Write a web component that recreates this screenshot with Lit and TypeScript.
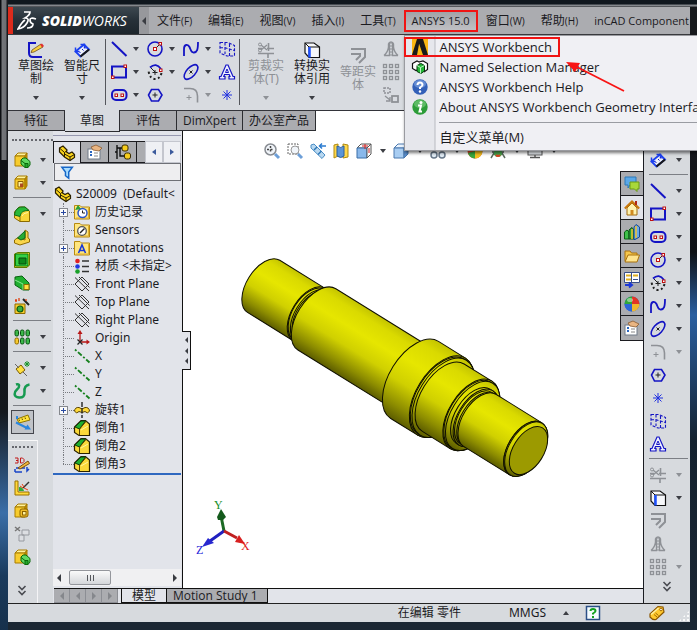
import { LitElement, html, svg, css, nothing, type TemplateResult, type SVGTemplateResult } from "lit";
import { customElement, property } from "lit/decorators.js";
import { classMap } from "lit/directives/class-map.js";

const B = "#1414c4";
const G = "#8e9196";

const cubeBase = svg`<path d="M1 4 4 1H13L11 4Z" fill="#fff29a" stroke="#a87c00"/><path d="M1 4H11V14H1Z" fill="#f7cc2e" stroke="#a87c00"/><path d="M11 4 13 1V11L11 14Z" fill="#c89200" stroke="#a87c00"/>`;
const greenCube = svg`<path d="M7 8 9 6H12L16 9.500V13L14 15.500H11L7 12Z" fill="#5fd860" stroke="#0a6a0a"/><path d="M11 11.500H14V15.500H11ZM7 8.500 11 11.500" fill="#23a82c" stroke="#0a6a0a"/>`;
const fillet = svg`<path d="M.5 6 5 1H11L15.500 5V15.500H6L.5 12Z" fill="#f9d63a" stroke="#8a6a00"/><path d="M.5 9C1 4 4 1 8 1H11L15 4.500C9 4.500 7 6 6 10.500Z" fill="#28b838" stroke="#0a6a18"/><path d="M6 10.500V15.500" stroke="#8a6a00"/><path d="M8 10Q9 7 14 6.500" fill="none" stroke="#fff6a0"/>`;
const chamfer = svg`<path d="M.5 7 7 .5H11.500L15.500 4V15.500H5L.5 12.500Z" fill="#fbd93a" stroke="#2a2200" stroke-width="1.200"/><path d="M1 7 7 1H11.500L5.500 9Z" fill="#1fae2e" stroke="#063c0c"/><path d="M5.500 9V15M5.500 9 12 1.500" fill="none" stroke="#5a4400"/><path d="M7 10 14 6" stroke="#fff6a0"/>`;
const folder = (inner: SVGTemplateResult) => svg`<path d="M.5 1.500H6L7.500 3H15.500V15H.5Z" fill="#ffe680" stroke="#b78a10"/><path d="M14.500 4V14H2" fill="none" stroke="#e0b030"/>${inner}`;
const dots = (c: string) => svg`${[1, 7, 13].map((y) => [1, 7, 13].map((x) => svg`<rect x=${x - 0.5} y=${y - 0.5} width="3" height="3" fill="none" stroke=${c} stroke-width="1.300"/>`))}`;

const icons: Record<string, SVGTemplateResult> = {
  sketch: svg`<path d="M8 1H1V11Q1 15 5 15H14" fill="none" stroke=${B} stroke-width="2"/><path d="M4 8 13 2 15 5 6 10 3 10.500Z" fill="#f8cf40" stroke="#5a3a10" stroke-width=".7"/><path d="M12 2.500 14 1.500 16 4 14 5.500Z" fill="#e03030"/>`,
  dimension: svg`<path d="M1.500 9.500 10 2.500 15 7.500 6.500 14.500Z" fill="#eef2fa" stroke="#1c40f0" stroke-width="1.800"/><path d="M15 7.500 6.500 14.500" stroke="#181818" stroke-width="2.200"/><path d="M1.500 5.500V9.500H5.500M6.500 2.500H10.500V6.500" fill="none" stroke="#1c40f0" stroke-width="1.500"/><path d="M5 9.500 6.500 11M8 7 9.500 8.500M10.500 5 12 6.500" stroke=${B}/>`,
  line: svg`<path d="M1 1 15.500 15" stroke=${B} stroke-width="2"/>`,
  rect: svg`<rect x="1" y="2.500" width="14" height="11" fill="none" stroke=${B} stroke-width="2"/><rect x="13" y="1" width="2.500" height="2.500" fill="#fff" stroke="#c01010"/><rect x=".5" y="12" width="2.500" height="2.500" fill="#fff" stroke="#c01010"/>`,
  slot: svg`<rect x="1" y="3" width="14.500" height="10" rx="4" fill="none" stroke=${B} stroke-width="2"/><rect x="4" y="7" width="2.500" height="2.500" fill="#fff" stroke="#c01010"/><rect x="10" y="7" width="2.500" height="2.500" fill="#fff" stroke="#c01010"/>`,
  circle: svg`<circle cx="8" cy="8" r="7" fill="none" stroke=${B} stroke-width="1.600"/><path d="m8 8 5-5" stroke="#222"/><rect x="6.500" y="6.500" width="3" height="3" fill="#fff" stroke="#c01010"/><rect x="12" y="1.500" width="2.500" height="2.500" fill="#fff" stroke="#c01010"/>`,
  arc: svg`<path d="M3 3.500Q9-2 14 5" fill="none" stroke=${B} stroke-width="1.800"/><path d="M14.500 9Q13 15 8 15T1.500 7" fill="none" stroke="#222" stroke-width="2" stroke-dasharray="2 2.500"/><path d="M8 6V11M5.500 8.500H10.500M4 4 8 8" stroke="#222"/><rect x="12.500" y="5" width="2.500" height="2.500" fill="#fff" stroke="#c01010"/>`,
  spline: svg`<path d="M1 15V8C1 3 5 3 6.500 6S8 12 11 11.500 15 9 15 1" fill="none" stroke=${B} stroke-width="1.800"/>`,
  ellipse: svg`<ellipse cx="8" cy="8" rx="9" ry="4.500" transform="rotate(-48 8 8)" fill="none" stroke=${B} stroke-width="1.600"/><path d="M6.500 6.500 9.500 9.500M9.500 6.500 6.500 9.500" stroke="#222"/>`,
  corner: svg`<path d="M1 1.500H7Q14.500 1.500 14.500 9V15.500" fill="none" stroke=${G} stroke-width="1.600"/><path d="M6 8V13M3.500 10.500H8.500" stroke=${G}/>`,
  hex: svg`<path d="M4.500 2.500H11.500L15 8 11.500 14H4.500L1.500 8Z" fill="none" stroke=${B} stroke-width="1.600"/><path d="M8 5.500V10.500M5.500 8H10.500" stroke="#222"/>`,
  star: svg`<path d="M8 3V13M3 8H13M4.500 4.500 11.500 11.500M11.500 4.500 4.500 11.500" stroke="#2030e0" stroke-width="1"/>`,
  lattice: svg`<path d="M1 1.500H9L15.500 4.500V15H8L1 12ZM1 6.500 7 7 15.500 9.500M6 1.500 6 13M10.500 3V15" fill="none" stroke=${B} stroke-width="1.100" stroke-dasharray="3 1.500"/>`,
  letter: svg`<path d="M7 1H9L14 12.500H15.500V15H10V12.500H11L10.200 10.500H5.500L4.800 12.500H6V15H.5V12.500H2Z" fill="#eef0ff" stroke=${B} stroke-width="1.200"/><path d="M8 5 6.500 8.500H9.500Z" fill="#fff" stroke=${B}/>`,
  trim: svg`<path d="M0 6.500H4M9 6.500H16M0 11.500H16M10.500 1V9M10 11V16" stroke=${G} stroke-width="1.600"/><path d="M3 3 9 8M3 8 9 3" stroke=${G} stroke-width="1.300"/><circle cx="2" cy="2.500" r="1.500" fill="none" stroke=${G}/><circle cx="2" cy="8.500" r="1.500" fill="none" stroke=${G}/>`,
  convert: svg`<path d="M1 1H10L15.500 5V15.500H5L1 11Z" fill="#f6f7fa" stroke="#111" stroke-width="1.200"/><path d="M1 1 5 5H15.500M5 5V15" fill="none" stroke="#111"/><path d="M5.500 5V15.500" stroke="#1c50ff" stroke-width="2.500"/>`,
  offset: svg`<path d="M1 1H15V9L9 15M1 6H10V8L6 12" fill="none" stroke=${G} stroke-width="2"/>`,
  mirror: svg`<path d="M1 14.500H6.500V2M15 14.500H9.500V2M1 14.500Q5 11 5.500 6V3Q6 1 8 1T10.500 3V6Q11 11 15 14.500" fill="none" stroke=${G} stroke-width="1.400"/><path d="M8 1V15" stroke=${G} stroke-dasharray="2 1"/>`,
  pattern: dots(G),
  move: svg`<path d="M1 1H7V6H1Z" fill="none" stroke=${G} stroke-dasharray="2 1" stroke-width="1.500"/><rect x="9" y="9" width="6" height="6" fill="none" stroke=${G} stroke-width="1.800"/><path d="M2 9 7 13M7 10V14H3" fill="none" stroke=${G} stroke-width="1.300"/>`,
  zoomfit: svg`<circle cx="6.500" cy="6.500" r="5.500" fill="#f1f5fa" stroke="#888c92" stroke-width="1.500"/><path d="M6.500 3V10M3 6.500H10" stroke="#444" stroke-dasharray="2 1.500" stroke-width="1.500"/><path d="m11 11 4 4" stroke="#6d9fd8" stroke-width="3"/>`,
  zoomarea: svg`<path d="M1 1H11V11H1Z" fill="none" stroke="#666" stroke-dasharray="2 1"/><circle cx="8" cy="7" r="4" fill="#f1f5fa" stroke="#999"/><path d="m11 11 4 4" stroke="#6d9fd8" stroke-width="3"/>`,
  previous: svg`<path d="M1 2 4 1 15 12 12 15.500 1 5Z" fill="#b9d8f0" stroke="#4d8fc6"/><path d="M4 7 7 4M8 11.500 11.500 8" stroke="#2f78b8" stroke-width="1.500"/><path d="M9.500 3H16M12 .5 9.500 3 12 5.500" fill="none" stroke="#2a7bd0" stroke-width="1.500"/>`,
  section: svg`<path d="M1 2 5 1V13L1 15ZM10 1 15 2V14L10 15Z" fill="#ffd84a" stroke="#b08a10"/><path d="M4 3Q8 6 11 3V13Q8 16 4 13Z" fill="#5a95d8" stroke="#2d5f9d"/>`,
  orient: svg`<path d="M1 5 5 1H15L11 5Z" fill="#fff" stroke="#555"/><path d="M1 5H11V15H1Z" fill="#8ab8ea" stroke="#3a6ea8"/><path d="M11 5 15 1V11L11 15Z" fill="#fff" stroke="#555"/><path d="M6 3H12M9 1V6M13 5V10" stroke="#d02020"/>`,
  display: svg`<path d="M1 5 5 1H15L11 5Z" fill="#eaf4ff" stroke="#4a78ae"/><path d="M1 5H11V15H1Z" fill="#a8cdf2" stroke="#4a78ae"/><path d="M11 5 15 1V11L11 15Z" fill="#5a90d0" stroke="#4a78ae"/>`,
  glasses: svg`<circle cx="4" cy="12" r="3" fill="#e2edf6" stroke="#68788a" stroke-width="1.500"/><circle cx="12" cy="12" r="3" fill="#e2edf6" stroke="#68788a" stroke-width="1.500"/>`,
  sphere: svg`<circle cx="8" cy="8" r="7.500" fill="#2d66d8"/><path d="M8 8V.5A7.500 7.500 0 0 0 .5 8Z" fill="#2fa83a"/><path d="M8 8V.5A7.500 7.500 0 0 1 15.500 8Z" fill="#e23526"/><path d="M8 8H.5A7.500 7.500 0 0 0 8 15.500Z" fill="#2d66d8"/><path d="M8 8H15.500A7.500 7.500 0 0 1 8 15.500Z" fill="#f0b72c"/><ellipse cx="6" cy="4" rx="3" ry="2" fill="#fff" opacity=".45"/>`,
  appearance: svg`<circle cx="8" cy="8" r="7.500" fill="#e04a28"/><path d="M8 8H15.500A7.500 7.500 0 0 1 8 15.500Z" fill="#f4c020"/><path d="M8 8V15.500A7.500 7.500 0 0 1 1 10L8 8Z" fill="#38a83e"/>`,
  scene: svg`<path d="M1 15 4 10 8 13 12 10 15 15M2 9H14" fill="none" stroke="#5a6a5c" stroke-width="1.500"/><circle cx="8" cy="10" r="4" fill="#4ca850"/><path d="M6 12Q8 14 10 12" stroke="#e04020" fill="none" stroke-width="2"/>`,
  monitor: svg`<rect x="1" y="3" width="14" height="9" fill="#e9edf1" stroke="#555"/><path d="M3 14.500H13M8 12V15" stroke="#555" stroke-width="1.500"/>`,
  extrude: svg`${cubeBase}${greenCube}`,
  cut: svg`${cubeBase}<path d="M4 6.500H9V12H4Z" fill="#fff0a0" stroke="#8a5f00"/><path d="M6 8.500H9V12H6Z" fill="#b04a20"/>`,
  fillet,
  chamfer,
  rib: svg`<path d="M.5 11 4 8.500 11 11V1L14 3V9L15.500 10V13L6 16 .5 14Z" fill="#f9d54a" stroke="#8f6b00"/><path d="M3.500 9 11 2V9L7 11Z" fill="#27ab34" stroke="#0a6a14"/>`,
  shell: svg`<path d="M.5 2 4 .5H15.500V13L13 15.500H.5Z" fill="#f7cc2e" stroke="#5d7a00"/><path d="M1.500 2H14V14H1.500Z" fill="#35d046" stroke="#07810f"/><path d="M5 6H12V12H5Z" fill="#0c8a1c" stroke="#064d0c"/>`,
  draft: svg`<path d="M1 2 8 1 15 8V15H9L1 10Z" fill="#20b030" stroke="#07610f"/><path d="M1 5 9 9V15" fill="none" stroke="#8ae890"/><rect x="10" y="9.500" width="5" height="5" fill="#ffe040" stroke="#8f6b00"/>`,
  wizard: svg`<path d="M1 6H11V15.500H1Z" fill="#f7cc2e" stroke="#8f6b00"/><circle cx="6" cy="11" r="3" fill="#38b040" stroke="#0a5a10" stroke-width="1.200"/><path d="M9 1 15 7" stroke="#222" stroke-width="2"/><path d="M2 1V4M5 0V3M12 1V3M1 2.500H3" stroke="#e04010" stroke-width="1.300"/>`,
  lpattern: svg`${[0, 1, 2].map((i) => svg`<rect x=${1 + i * 5.5} y="1" width="3.500" height="6" rx="1.500" fill="#3cb84a" stroke="#06500e"/><rect x=${1 + i * 5.5} y="9" width="3.500" height="6" rx="1.500" fill=${i ? "#3cb84a" : "#f7c92e"} stroke=${i ? "#06500e" : "#8f6b00"}/>`)}`,
  refgeo: svg`<path d="M2 9 7 5 11 10 6 14Z" fill="#ffe040" stroke="#7a5a00"/><path d="M1 4 5 8M9 12 13 16" stroke="#666"/><path d="M13 1V7M10 4H16M11 2 15 6M15 2 11 6" stroke="#18942a"/>`,
  curve: svg`<path d="M2 1.500C6 0 6 4 3 6.500S-1 14 5 14.500Q11 15 10.500 9C10 4 12 2 15.500 1.500" fill="none" stroke="#169a50" stroke-width="2.500"/>`,
  instant: svg`<path d="M2 5 13 1 15 6 4 9Z" fill="#ffe23a" stroke="#8f7600"/><path d="M4 5.500 4.500 7M7 4.500 7.500 6M10 3.500 10.500 5" stroke="#604c00"/><path d="M2 2V5M1 8.500 12 14" stroke="#2a86e0" stroke-width="2"/><path d="m16 15.500-6.500 0 3-5Z" fill="#2a86e0"/>`,
  sketch3d: svg`<path d="M2 11H11M1 15H8M1 12V15M13 10V14L15 12" fill="none" stroke="#1844c8" stroke-width="1.500"/><path d="M4 11 14 4 15.500 6.500 6 12Z" fill="#f0b83a" stroke="#7d4b10"/><path d="M1 1H4V6H1M2 3.500H4M6.500 1V6H8.500L10 4.500V2.500L8.500 1Z" fill="none" stroke="#c01818"/>`,
  weldment: svg`<path d="M1 1H4V12H15V15H1Z" fill="#ffd83a" stroke="#9a7200"/><path d="M5 11V7Q9 7 10 11Z" fill="#2cab3c"/><path d="M15 2 9 8" stroke="#333" stroke-width="1.500"/><path d="M8 4 10 7M6 6 9 8M10 8 14 10" stroke="#f04010"/>`,
  block: svg`${cubeBase}<rect x="6" y="6" width="8" height="8" rx="2" fill="#f2be28" stroke="#8a6200"/><rect x="8.500" y="8.500" width="3.500" height="3.500" fill="#fff2a0" stroke="#8a6200"/>`,
  gray: svg`<path d="M1 1 6 5M6 1 1 5" stroke="#777" stroke-width="1.500"/><path d="M8 4H15V9H8ZM5 9H10V15H5Z" fill="#dcdee2" stroke="#96999f"/>`,
  part: svg`<path d="M.5 3 4 1 8 5 7.500 7 10 8.500 13 7 15.500 9.500V12.500L11 15.500 5.500 12 .5 7Z" fill="#fbd41c" stroke="#2a2000" stroke-width="1.200"/><path d="M.5 3 5.500 7.500V12M5.500 7.500 8 5.500M11 15.500V12L15.500 9.500M5.500 9 11 12" fill="none" stroke="#2a2000"/>`,
  property: svg`<rect x="1" y="5" width="12" height="10" fill="#fff" stroke="#707a88"/><path d="M3 8H5M3 11H5" stroke="#2b66c0" stroke-width="2"/><path d="M7 9H11M7 12H11" stroke="#888"/><path d="M4 3 9 1 15 4 12 7 6 6Z" fill="#e9b582" stroke="#8a5a30" stroke-width=".8"/>`,
  config: svg`<path d="M2 1V15M2 4H7M5 4V12H10M0 8H2" fill="none" stroke="#111" stroke-width="1.400"/><rect x="7" y="1" width="6" height="6" rx="2" fill="#f6cc1c" stroke="#3a2c00"/><rect x="9.500" y="9" width="6" height="6" rx="2" fill="#f6cc1c" stroke="#3a2c00"/>`,
  filter: svg`<path d="M1 1.500H14L9.500 7.500V15L5.500 12V7.500Z" fill="#a8dcff" stroke="#1667c8" stroke-width="1.800"/>`,
  history: folder(svg`<circle cx="8.500" cy="9" r="4.500" fill="#fff" stroke="#2b55c8" stroke-width="1.500"/><path d="M8.500 6.500V9H11" fill="none" stroke="#222"/><path d="M1 6 4 1 7 5Z" fill="#28a038"/>`),
  sensors: folder(svg`<circle cx="8" cy="9" r="4.300" fill="#fff" stroke="#555" stroke-width="1.300"/><path d="M6 11 10.500 6.500" stroke="#222" stroke-width="1.500"/>`),
  annotations: folder(svg`<path d="M4.500 13 8 5 11.500 13M5.800 10.500H10.500" fill="none" stroke="#1838d8" stroke-width="1.600"/>`),
  material: svg`<circle cx="3.500" cy="3" r="2.300" fill="#e02020"/><circle cx="3.500" cy="8.500" r="2.300" fill="#2038e0"/><circle cx="3.500" cy="13.500" r="2.300" fill="#18a028"/><path d="M8 3H15M8 8.500H15M8 13.500H15" stroke="#333" stroke-width="1.600"/>`,
  plane: svg`<path d="M8 1 15 8 8 15 1 8ZM1 1.500 15 15M5 1 15.500 11.500" fill="none" stroke="#333"/>`,
  origin: svg`<path d="M6 11V2M7 12H14" stroke="#b81818" stroke-width="1.300"/><path d="M6 0 8.500 4H3.500ZM16 12 12.500 9.500V14.500Z" fill="#b81818"/><path d="M3.500 9.500 8.500 14.500M8.500 9.500 3.500 14.500" stroke="#222" stroke-width="1.200"/>`,
  axis: svg`<path d="M1 1.500 15.500 14.500" stroke="#16801e" stroke-width="1.800" stroke-dasharray="2 2 5 2"/>`,
  revolve: svg`<path d="M.5 9Q1 5 5 5.500L7 6.500H9L11 5.500Q15 5 15.500 9L13.500 11 11 9.500 8 10.500 5 9.500 2.500 11Z" fill="#ffd93a" stroke="#5a4400"/><path d="M8 0V16" stroke="#222" stroke-dasharray="5 1.500" stroke-width="1.400"/>`,
  chat: svg`<path d="M1 1H12V9H6L4 12V9H1Z" fill="#5aa8e8" stroke="#2c78b8"/><path d="M6 6H15V13H13V15.500L10.500 13H6Z" fill="#a8d83a" stroke="#6b9a14"/>`,
  home: svg`<path d="M3 8V15H13V8L8 3Z" fill="#fff3b0" stroke="#a06a10"/><path d="M.8 8.500 8 1.500 15.200 8.500" fill="none" stroke="#c8780c" stroke-width="2"/><path d="M6.500 10H9.500V15H6.500Z" fill="#d08a20"/><path d="M12 1V5" stroke="#b02818" stroke-width="2"/>`,
  library: svg`<path d="M.5 8 3 6 5 8V15H.5Z" fill="#3fc04a" stroke="#0a6014"/><path d="M5 6 8 3.500 10 6V15H5Z" fill="#28a038" stroke="#0a5014"/><path d="M10 3 12 .5 15.500 3V13L11 15.500H10Z" fill="#68a8ec" stroke="#1c4a90"/><path d="M8 5V15M12 2V14" stroke="#f2c22e" stroke-width="1.500"/>`,
  open: svg`<path d="M1 13V3H6L7.500 5H13V7" fill="#f6c64a" stroke="#a8700c"/><path d="M1 14 4 7H15.500L13 14Z" fill="#ffe48c" stroke="#a8700c"/>`,
  palette: svg`<path d="M.5.5H15.500V10.500H.5Z" fill="#fff" stroke="#3a5088"/><path d="M2 3.500H7M9 3.500H14M2 7.500H7" stroke="#e0b020" stroke-width="2"/><path d="M7.500 1V10M9 7.500H14" stroke="#3a5088"/><path d="M1 13H7M5 10.500 8 13 5 15.500" fill="none" stroke="#1c38d8" stroke-width="2"/>`,
  chevrons: svg`<path d="M4.500 3 8 6.500 11.500 3M4.500 8 8 11.500 11.500 8" fill="none" stroke="#4a4c52" stroke-width="1.600"/>`,
  ansys: svg`<rect width="16" height="16" fill="#fbb813"/><path d="M5 0H8L5 16H0ZM8 0H11L16 16H11L6.500 3Z" fill="#1a1a1a"/>`,
  named: svg`<path d="M.5 4.500 5 2 8 3.500V10L4 11.500.5 9.500Z" fill="#fff" stroke="#111" stroke-width="1.200"/><path d="M7 3 11 2 15.500 4.500V10.500L12 13" fill="#fff" stroke="#111" stroke-width="1.200"/><path d="M5 6.500 9 4.500 12.500 6.500V12L9 14.500 5 12.500Z" fill="#24b838" stroke="#063a0c"/><path d="M5 6.500 8.500 8.500 12.500 6.500M8.500 8.500V14.500" fill="none" stroke="#b8f0c0"/>`,
  help: svg`<circle cx="8" cy="8" r="7.700" fill="#3360b8"/><ellipse cx="8" cy="5" rx="6" ry="4" fill="#7ba0de" opacity=".7"/><path d="M5.500 6Q5.500 3.500 8 3.500T10.500 6Q10.500 7 8 8.500V10" fill="none" stroke="#fff" stroke-width="2"/><circle cx="8" cy="12.500" r="1.200" fill="#fff"/>`,
  info: svg`<circle cx="8" cy="8" r="7.700" fill="#2c9c38"/><ellipse cx="8" cy="5" rx="6" ry="4" fill="#7ed083" opacity=".6"/><circle cx="9" cy="3.500" r="1.500" fill="#fff"/><path d="M6 6.500H9L7.500 12.500H10" fill="none" stroke="#fff" stroke-width="2"/>`,
  tip: svg`<rect x="1.500" y="1.500" width="13" height="13" fill="#f4fbff" stroke="#2b4f86" stroke-width="1.500"/><path d="M5.500 6Q5.500 4 8 4T10.500 6Q10.500 7 8 8.500V9.500" fill="none" stroke="#12a020" stroke-width="2"/><rect x="7" y="11" width="2" height="2" fill="#12a020"/>`,
  tag: svg`<path d="M1 9 9 1.500 14 2 15 7 7 14.500Q4 15.500 1 12Z" fill="#ffc92e" stroke="#8a5600" stroke-width="1.200"/><path d="M2 9.500 9.500 3" stroke="#fff0a0" stroke-width="1.500"/><circle cx="12" cy="4.500" r="1.300" fill="#fff" stroke="#a36a00"/><path d="m6.500 8 3 2.500M5 9.500 8 12" stroke="#a36a00"/>`,
};

@customElement("app-icon")
export class AppIcon extends LitElement {
  @property() name = "";
  static styles = css`
    :host { display: block; width: 16px; height: 16px; flex: none; }
    svg { display: block; width: 100%; height: 100%; overflow: visible; }
  `;
  render() {
    return html`<svg viewBox="0 0 16 16" aria-hidden="true">${icons[this.name] ?? nothing}</svg>`;
  }
}

/* One turned step of the shaft, in axis coordinates: from..to along the axis, r the radius. */
interface Step { from: number; to: number; r: number; }
const AXIS = 65;
const SQUASH = 0.56;
const steps: Step[] = [
  { from: 159, to: 319, r: 92 },
  { from: 319, to: 327, r: 88 },
  { from: 327, to: 350, r: 80 },
  { from: 347, to: 700, r: 108 },
  { from: 692, to: 787, r: 136 },
  { from: 787, to: 793, r: 132 },
  { from: 793, to: 891, r: 119 },
  { from: 891, to: 897, r: 115 },
  { from: 899, to: 908, r: 96 },
  { from: 908, to: 916, r: 90 },
  { from: 922, to: 1083, r: 92 },
  { from: 1083, to: 1086, r: 91 },
];

@customElement("shaft-view")
export class ShaftView extends LitElement {
  static styles = css`
    :host { display: block; flex: 1; min-height: 0; }
    svg { display: block; width: 100%; height: 100%; }
    .axis { font: 12px "Liberation Serif", serif; }
  `;
  private step(s: Step) {
    const top = AXIS - s.r, bottom = AXIS + s.r, b = s.r * SQUASH;
    return svg`<path d="M${s.from} ${top}A${b} ${s.r} 0 0 0 ${s.from} ${bottom}L${s.to} ${bottom}A${b} ${s.r} 0 0 0 ${s.to} ${top}Z" fill="url(#metal)"/>
      <ellipse cx=${s.to} cy=${AXIS} rx=${b} ry=${s.r} fill="url(#metal)"/>`;
  }
  render() {
    return html`<svg viewBox="183 171 460 417" role="img" aria-label="S20009">
      <defs>
        <linearGradient id="metal" x1="0" y1="0" x2="0" y2="1">
          <stop offset="0" stop-color="#c4c400"/><stop offset=".12" stop-color="#dada00"/>
          <stop offset=".35" stop-color="#e6e600"/><stop offset=".6" stop-color="#d0d000"/>
          <stop offset=".85" stop-color="#8c8c00"/><stop offset="1" stop-color="#5c5c00"/>
        </linearGradient>
      </defs>
      <g transform="translate(230 240) scale(.3333) rotate(31.8)" stroke="#101000" stroke-width="3">
        ${steps.map((s) => this.step(s))}
        <ellipse cx="1094" cy=${AXIS} rx="46" ry="80" fill="#9c9a00"/>
      </g>
      <g stroke-width="3">
        <path d="M224 531 221 516" stroke="#1c6a24"/><path d="m224 531-14 10" stroke="#2020c0"/><path d="m224 531 13 7" stroke="#c02020"/>
      </g>
      <path d="m221 509 5 8-3 3h-5l-1-3Z" fill="#145a1c"/>
      <path d="m202 547 6-9 6 5Z" fill="#2828d0"/>
      <path d="m245 544-6-9-4 7Z" fill="#d82020"/>
      <g class="axis"><text x="214" y="509" fill="#18902a">Y</text><text x="196" y="554" fill="#2222d8">Z</text><text x="241" y="550" fill="#e01818">X</text></g>
    </svg>`;
  }
}

type Tool = [icon: string, label: string, arrow?: boolean];
const sketchTools: Tool[] = [
  ["line", "直线", true], ["circle", "圆", true], ["spline", "样条曲线", true], ["lattice", "基准面"],
  ["rect", "矩形", true], ["arc", "圆弧", true], ["ellipse", "椭圆", true], ["letter", "文字"],
  ["slot", "槽口", true], ["hex", "多边形"], ["corner", "圆角", true], ["star", "点"],
];
const rightTools: (Tool | null)[] = [
  ["dimension", "智能尺寸", true], null,
  ["line", "直线", true], ["rect", "矩形", true], ["slot", "槽口", true], ["circle", "圆", true], ["arc", "圆弧", true],
  ["spline", "样条曲线", true], ["ellipse", "椭圆", true], ["corner", "圆角", true], ["hex", "多边形"], ["star", "点"],
  ["lattice", "基准面"], ["letter", "文字"], null,
  ["trim", "剪裁实体", true], ["convert", "转换实体引用", true], ["offset", "等距实体"], ["mirror", "镜向实体"], ["pattern", "线性阵列", true],
];
const leftTools: (Tool | null)[] = [
  ["extrude", "拉伸凸台", true], ["cut", "拉伸切除", true], null,
  ["fillet", "圆角", true], ["rib", "筋"], ["shell", "抽壳"], ["draft", "拔模"], ["wizard", "异型孔向导"], null,
  ["lpattern", "线性阵列", true], null, ["refgeo", "参考几何体", true], ["curve", "曲线", true], null,
];
const leftTools2: Tool[] = [["sketch3d", "3D草图"], ["weldment", "焊件"], ["block", "结构构件"], ["gray", "剪裁"], ["extrude", "拉伸"]];
const viewTools: Tool[] = [
  ["zoomfit", "整屏显示全图"], ["zoomarea", "局部放大"], ["previous", "上一视图"], ["section", "剖面视图"],
  ["orient", "视图定向", true], ["display", "显示样式", true], ["glasses", "隐藏项目", true],
  ["appearance", "编辑外观"], ["scene", "应用布景", true], ["monitor", "视图设定", true],
];
const menus: [cjk: string, mnemonic: string, latin?: string][] = [["文件", "(F)"], ["编辑", "(E)"], ["视图", "(V)"], ["插入", "(I)"], ["工具", "(T)"], ["", "", "ANSYS 15.0"], ["窗口", "(W)"], ["帮助", "(H)"], ["", "", "inCAD Component"]];
const popup: [string, string][] = [["ansys", "ANSYS Workbench"], ["named", "Named Selection Manager"], ["help", "ANSYS Workbench Help"], ["info", "About ANSYS Workbench Geometry Interface"]];
const tree: [icon: string, label: string, expandable?: boolean][] = [
  ["history", "历史记录", true], ["sensors", "Sensors"], ["annotations", "Annotations", true], ["material", "材质 <未指定>"],
  ["plane", "Front Plane"], ["plane", "Top Plane"], ["plane", "Right Plane"], ["origin", "Origin"],
  ["axis", "X"], ["axis", "Y"], ["axis", "Z"], ["revolve", "旋转1", true], ["chamfer", "倒角1"], ["chamfer", "倒角2"], ["chamfer", "倒角3"],
];

@customElement("app-root")
export class AppRoot extends LitElement {
  static styles = css`
    :host { display: block; font: 12px/16px "Noto Sans", "Noto Sans CJK SC", sans-serif; color: #1b1b1f; }
    * { box-sizing: border-box; }
    button { font: inherit; color: inherit; background: none; border: 0; padding: 0; margin: 0; text-align: left; white-space: nowrap; }
    .window { min-height: 100vh; padding: 7px 7px 8px 8px; display: flex; flex-direction: column; overflow: hidden; position: relative;
      background:
        linear-gradient(90deg, #0c0e12 1px, #74767a 2px, #6c6e73 6px, #1a1c20 7px) 0 0 / 8px 160px no-repeat,
        linear-gradient(#101216, #14181e 40%, #3a6ea8 56%, #1a3a5c 66%, #0c141c) 0 160px / 8px 100% no-repeat,
        linear-gradient(#10171e 4px, #7d8085 5px, #8c8f94 6px, #1c1e22 7px) 0 0 / 100% 7px no-repeat,
        linear-gradient(#17191d 20%, #0e1216 40%, #2a5fa0 50%, #14222f 70%, #1b2734) 100% 0 / 7px 100% no-repeat,
        #1b2733; }
    .frame { flex: 1; display: flex; flex-direction: column; background: #d7dade; min-width: 0; }

    .menubar, .tabs, .sheets { font-family: "Open Sans", "Noto Sans CJK SC", sans-serif; }
    .menubar { height: 28px; display: flex; background: #abacb0; border-bottom: 1px solid #3a3b3f; }
    .brand { width: 131px; flex: none; display: flex; align-items: center; gap: 5px; padding-left: 4px; border-left: 5px solid #dc2b1c; background: linear-gradient(#3d4850, #263038 50%, #1c252c); color: #fff; }
    .brand svg { width: 20px; height: 21px; flex: none; }
    .word { font: italic 400 14px/18px "Open Sans", sans-serif; }
    .word b { font-weight: 800; }
    .collapse { width: 10px; flex: none; display: grid; place-items: center; background: #97989c; }
    .menus { display: flex; align-items: center; min-width: 0; flex: 1; }
    .menu { position: relative; flex: none; }
    .menus > .menu:last-child { flex: 0 1 auto; min-width: 0; overflow: hidden; }
    .menus > .menu:last-child > button { padding-right: 0; }
    .menu > button { height: 22px; padding: 0 8px; display: flex; align-items: center; }
    .small { font-size: 11px; }
    .mnemonic { font-size: 10px; }
    .menu.open > button { border: 2px solid #f01414; padding: 0 6px; background: linear-gradient(#a2a3a7, #bfc0c4); }

    .popup { position: absolute; z-index: 5; left: 0; top: 25px; width: max-content; padding: 1px 24px 3px 0; font-size: 13px; border: 1px solid #9a9ba0; box-shadow: 1px 2px 3px #0008;
      background: linear-gradient(90deg, #e6e7ec 29px, #b8bac0 30px, #f0f0f4 31px); }
    .popup button { display: flex; align-items: center; height: 20px; padding: 0 6px 0 7px; }
    .popup button span { padding-left: 12px; }
    .popup .marked { height: 20px; border: 2px solid #f01414; margin-left: -1px; padding: 0 6px; }
    .popup hr { border: 0; border-top: 1px solid #9a9ca2; margin: 5px 0 4px 34px; }
    .arrow { position: absolute; left: 158px; top: 22px; width: 64px; height: 38px; }

    .ribbon { height: 76px; flex: none; display: flex; background: #d8dbe0; border-bottom: 1px solid #33343a; padding-top: 4px; }
    .big { width: 46px; display: flex; flex-direction: column; align-items: center; line-height: 13px; text-align: center; padding-top: 3px; white-space: normal; }
    .big span { width: 40px; height: 38px; padding-top: 1px; text-align: center; display: block; }
    .big.low { padding-top: 9px; }
    .off { color: #8e9196; }
    .caret { width: 0; height: 0; flex: none; border: 3px solid transparent; border-top: 4px solid #3c3e44; border-bottom: 0; }
    .off .caret { border-top-color: #8e9196; }
    .caret.none { visibility: hidden; }
    .rule { width: 1px; height: 66px; background: #54565c; flex: none; }
    .grid { display: grid; grid-template-columns: repeat(4, 36px); width: 133px; grid-auto-rows: 23px; padding-left: 5px; align-content: start; margin-top: -2px; }
    .grid button { display: flex; align-items: center; gap: 6px; }
    .column { display: grid; grid-auto-rows: 23px; align-content: start; align-items: center; margin: -2px 0 0 2px; }
    .gap { width: 5px; } .wide { width: 3px; }

    .tabs { height: 20px; flex: none; display: flex; background: #fff; }
    .tabs button { padding: 0 6px; text-align: center; background: #abacb0; border-right: 1px solid #2c2d31; border-bottom: 1px solid #2c2d31; }
    .tabs .w { width: 57px; }
    .tabs .on { height: 22px; margin-top: -1px; position: relative; z-index: 1; width: 55px; background: #d8dbe0; }

    .body { flex: 1; display: flex; min-height: 0; }
    .left { width: 45px; flex: none; display: flex; flex-direction: column; }
    .tool { height: 23px; width: 100%; display: flex; align-items: center; gap: 10px; padding-left: 6px; flex: none; }
    .sep { height: 1px; margin: 3px 2px 4px 5px; background: #7c7f85; flex: none; }
    .grip { height: 17px; flex: none; display: flex; align-items: center; padding-left: 4px; }
    .grip i { width: 100%; border-top: 2px dotted #66686e; }
    .pressed { margin-left: 3px; width: 23px; height: 24px; flex: none; border: 1px solid #44464c; background: #c0c3c8; display: grid; place-items: center; }
    .second { margin-top: 6px; border-top: 1px solid #fafafa; flex: 1; width: 30px; border-right: 1px solid #f4f4f6; display: flex; flex-direction: column; }
    .second .grip { height: 12px; padding-right: 4px; }
    .second .more { margin: auto 0 4px 6px; }

    .panel { width: 130px; flex: none; display: flex; flex-direction: column; border-right: 1px solid #111; background: #e2e4ea; padding: 4px 1px 0 0; position: relative; }
    .ptabs { display: flex; height: 28px; border-top: 1px solid #9799b0; padding-top: 5px; overflow: hidden; }
    .ptabs button { width: 28px; flex: none; display: grid; place-items: center; background: #abacb0; border: 1px solid #1c1c20; border-left-width: 0; }
    .ptabs .on { background: #e2e4ea; border-bottom: 0; border-left-width: 1px; }
    .ptabs .stub { width: 8px; border-right: 0; }
    .ptabs .nav { width: 18px; background: #eff0f4; border: 1px solid #c4c6ce; }
    .ptabs .tri { border-width: 3px; border-left: 0; border-right: 4px solid #3c5a9c; }
    .filter { height: 18px; margin-left: 1px; border: 1px solid #6e7076; background: #eeeef0; display: flex; align-items: center; padding-left: 6px; gap: 4px; }
    .filter app-icon { width: 13px; height: 13px; }
    .filter input { border: 0; background: none; outline: 0; min-width: 0; flex: 1; font: inherit; padding: 0; }
    .tree { list-style: none; margin: 4px 0 0; padding: 0; overflow: hidden; line-height: 18px; white-space: nowrap; border-bottom: 2px solid #2f68c0; }
    .tree ul { list-style: none; margin: 0; padding: 0; }
    .row { display: flex; align-items: center; height: 18px; }
    .root { padding-left: 2px; gap: 5px; white-space: pre; }
    .twig { width: 21px; height: 18px; flex: none; position: relative; }
    .twig::before { content: ""; position: absolute; left: 10px; top: 0; bottom: 0; border-left: 1px dotted #77797f; }
    .twig::after { content: ""; position: absolute; left: 10px; right: 0; top: 9px; border-top: 1px dotted #77797f; }
    li:last-child > .row > .twig::before { bottom: 9px; }
    .tree ul .row > span { padding-left: 5px; }
    .box { position: absolute; z-index: 1; left: 6px; top: 5px; width: 9px; height: 9px; border: 1px solid #85888e; background: linear-gradient(#2848a0, #2848a0) center / 5px 1px no-repeat, linear-gradient(#2848a0, #2848a0) center / 1px 5px no-repeat, #fafafa; }
    .scroll { margin-top: auto; height: 17px; display: flex; align-items: center; background: #f0f0f2; padding: 0 4px; gap: 8px; flex: none; margin-bottom: 17px; }
    .thumb { width: 42px; height: 15px; border: 1px solid #94969c; border-radius: 2px; background: linear-gradient(#fafafa, #d4d6da); display: flex; justify-content: center; align-items: center; gap: 2px; }
    .thumb i { width: 1px; height: 6px; background: #55575c; }
    .scroll .r { margin-left: auto; }
    .tri { width: 0; height: 0; border: 4px solid transparent; border-right: 4px solid #3a3c42; border-left: 0; display: block; }
    .tri.r { transform: scaleX(-1); }
    .handle { position: absolute; left: 129px; top: 200px; width: 9px; height: 39px; background: #e2e4ea; border: 1px solid #111; border-left: 0; display: flex; flex-direction: column; justify-content: space-evenly; align-items: center; z-index: 2; }
    .handle .tri { border-width: 3px; border-left: 0; }

    .centre { flex: 1; min-width: 0; display: flex; flex-direction: column; position: relative; background: #fff; padding-bottom: 15px; }
    .views { height: 40px; display: flex; align-items: center; justify-content: center; gap: 7px; flex: none; margin-right: 6px; }
    .views button { display: flex; align-items: center; gap: 8px; }
    .pane { position: absolute; right: 0; top: 40px; width: 23px; display: flex; flex-direction: column; border: 1px solid #1c1c20; border-right: 0; }
    .pane button { height: 24px; display: grid; place-items: center; background: #abacb0; border-bottom: 1px solid #1c1c20; }
    .pane button:last-child { border-bottom: 0; }
    .pane .on { background: #e2e4ea; }

    .right { width: 47px; flex: none; border-left: 1px solid #1a1c22; display: flex; flex-direction: column; padding-top: 17px; }
    .right .more { margin: 1px 0 0 15px; }

    .sheets { height: 15px; margin-top: -15px; margin-left: 46px; margin-right: 47px; display: flex; flex: none; position: relative; z-index: 1; background: #e2e4ea; border-top: 1px solid #111; }
    .sheets button { line-height: 13px; border-right: 1px solid #111; border-bottom: 1px solid #111; background: #abacb0; }
    .sheets .nav { width: 16px; display: grid; place-items: center; border-color: #8c8e94; }
    .sheets .nav .tri { border-right-color: #85878c; }
    .sheets .on { background: #e2e4ea; padding: 0 10px; border-left: 1px solid #111; margin-left: 3px; }
    .sheets .study { padding: 0 9px 0 6px; }

    .status { height: 19px; flex: none; display: flex; align-items: center; justify-content: flex-end; border-top: 1px solid #222; background: #d7dade; }
    .status .units { margin-left: 48px; display: flex; align-items: center; gap: 17px; }
    .up { transform: scaleY(-1); }
    .status .tip { margin-left: 16px; }
    .status .tag { margin: 0 13px 0 48px; }
    .resize { width: 12px; height: 12px; align-self: end; background: radial-gradient(#fafafa 40%, #aeb0b6 45%, transparent 50%) 0 0 / 4px 4px; clip-path: polygon(100% 0, 100% 100%, 0 100%); }
  `;

  private tool(t: Tool, cls = "tool"): TemplateResult {
    const off = ["corner", "trim", "pattern"].includes(t[0]);
    return html`<button class=${classMap(cls ? { [cls]: true, off } : { off })} aria-label=${t[1]}><app-icon name=${t[0]}></app-icon>${t[2] ? html`<i class="caret"></i>` : nothing}</button>`;
  }
  private big(icon: string, text: string, cls = "", arrow = true) {
    return html`<button class="big ${cls}"><app-icon name=${icon}></app-icon><span>${text}</span><i class="caret ${arrow ? "" : "none"}"></i></button>`;
  }
  private popup() {
    return html`<div class="popup">
      ${popup.map(([icon, text], i) => html`<button class=${i === 0 ? "marked" : ""}><app-icon name=${icon}></app-icon><span>${text}</span></button>`)}
      <hr />
      <button><app-icon></app-icon><span>自定义菜单(M)</span></button>
      <svg class="arrow" viewBox="0 0 64 38" aria-hidden="true"><path d="M61 33 10 7" stroke="#f81414" stroke-width="1.800"/><path d="M3 4 17 5 12 14Z" fill="#f81414"/></svg>
    </div>`;
  }

  render() {
    return html`<div class="window"><div class="frame">
      <header class="menubar">
        <div class="brand">
          <svg viewBox="0 0 20 21" aria-hidden="true"><path d="M7 2H13Q13 5 8 8Q13 8 10 13Q7 18 1 19Q5 12 8 10M19 9Q13 7 13 10T16 14Q16 18 10 18" fill="none" stroke="#fff" stroke-width="1.700"/></svg>
          <span class="word"><b>SOLID</b>WORKS</span>
        </div>
        <button class="collapse" aria-label="收起"><i class="tri"></i></button>
        <nav class="menus">
          ${menus.map(([cjk, mnemonic, latin]) => {
            const open = !!latin?.startsWith("ANSYS");
            return html`<div class=${classMap({ menu: true, open })}><button>${latin ? html`<span class="small">${latin}</span>` : html`${cjk}<span class="mnemonic">${mnemonic}</span>`}</button>${open ? this.popup() : nothing}</div>`;
          })}
        </nav>
      </header>
      <div class="ribbon">
        <span class="gap"></span>
        ${this.big("sketch", "草图绘制")}${this.big("dimension", "智能尺寸")}
        <i class="rule"></i>
        <div class="grid">${sketchTools.map((t) => this.tool(t, ""))}</div>
        <i class="rule"></i><span class="wide"></span>
        ${this.big("trim", "剪裁实体(T)", "off")}${this.big("convert", "转换实体引用")}${this.big("offset", "等距实体", "off low", false)}
        <div class="column">${(["mirror", "pattern", "move"] as const).map((n) => html`<button aria-label=${n}><app-icon name=${n}></app-icon></button>`)}</div>
      </div>
      <nav class="tabs"><button class="w">特征</button><button class="on">草图</button><button class="w">评估</button><button>DimXpert</button><button>办公室产品</button></nav>
      <main class="body">
        <aside class="left">
          <div class="grip"><i></i></div>
          ${leftTools.map((t) => (t ? this.tool(t) : html`<i class="sep"></i>`))}
          <button class="pressed" aria-label="Instant3D"><app-icon name="instant"></app-icon></button>
          <div class="second">
            <div class="grip"><i></i></div>
            ${leftTools2.map((t) => this.tool(t))}
            <button class="more" aria-label="更多"><app-icon name="chevrons"></app-icon></button>
          </div>
        </aside>
        <section class="panel">
          <div class="ptabs">
            <button class="on" aria-label="设计树"><app-icon name="part"></app-icon></button>
            <button aria-label="属性"><app-icon name="property"></app-icon></button>
            <button aria-label="配置"><app-icon name="config"></app-icon></button>
            <button class="stub" aria-label="尺寸"></button>
            <button class="nav" aria-label="向左"><i class="tri"></i></button>
            <button class="nav" aria-label="向右"><i class="tri r"></i></button>
          </div>
          <label class="filter"><app-icon name="filter"></app-icon><input aria-label="过滤" /></label>
          <ul class="tree"><li>
            <div class="row root"><app-icon name="part"></app-icon><span>S20009  (Default&lt;</span></div>
            <ul>${tree.map(([icon, label, ex]) => html`<li><div class="row"><i class="twig">${ex ? html`<i class="box"></i>` : nothing}</i><app-icon name=${icon}></app-icon><span>${label}</span></div></li>`)}</ul>
          </li></ul>
          <div class="scroll"><i class="tri"></i><i class="thumb"><i></i><i></i><i></i></i><i class="tri r"></i></div>
          <button class="handle" aria-label="折叠"><i class="tri"></i><i class="tri"></i><i class="tri"></i></button>
        </section>
        <section class="centre">
          <div class="views">${viewTools.map((t) => this.tool(t, ""))}</div>
          <shaft-view></shaft-view>
          <div class="pane">${["chat", "home", "library", "open", "palette", "sphere", "property"].map((n) => html`<button class=${n === "home" ? "on" : ""} aria-label=${n}><app-icon name=${n}></app-icon></button>`)}</div>
        </section>
        <aside class="right">
          ${rightTools.map((t) => (t ? this.tool(t) : html`<i class="sep"></i>`))}
          <button class="more" aria-label="更多"><app-icon name="chevrons"></app-icon></button>
        </aside>
      </main>
      <nav class="sheets">
        ${[0, 0, 1, 1].map((r) => html`<button class="nav" aria-label=${r ? "后" : "前"}><i class="tri ${r ? "r" : ""}"></i></button>`)}
        <button class="on">模型</button><button class="study">Motion Study 1</button>
      </nav>
      <footer class="status">
        <span>在编辑 零件</span><button class="units">MMGS<i class="caret up"></i></button>
        <button class="tip" aria-label="帮助"><app-icon name="tip"></app-icon></button>
        <button class="tag" aria-label="标签"><app-icon name="tag"></app-icon></button><i class="resize"></i>
      </footer>
    </div></div>`;
  }
}
